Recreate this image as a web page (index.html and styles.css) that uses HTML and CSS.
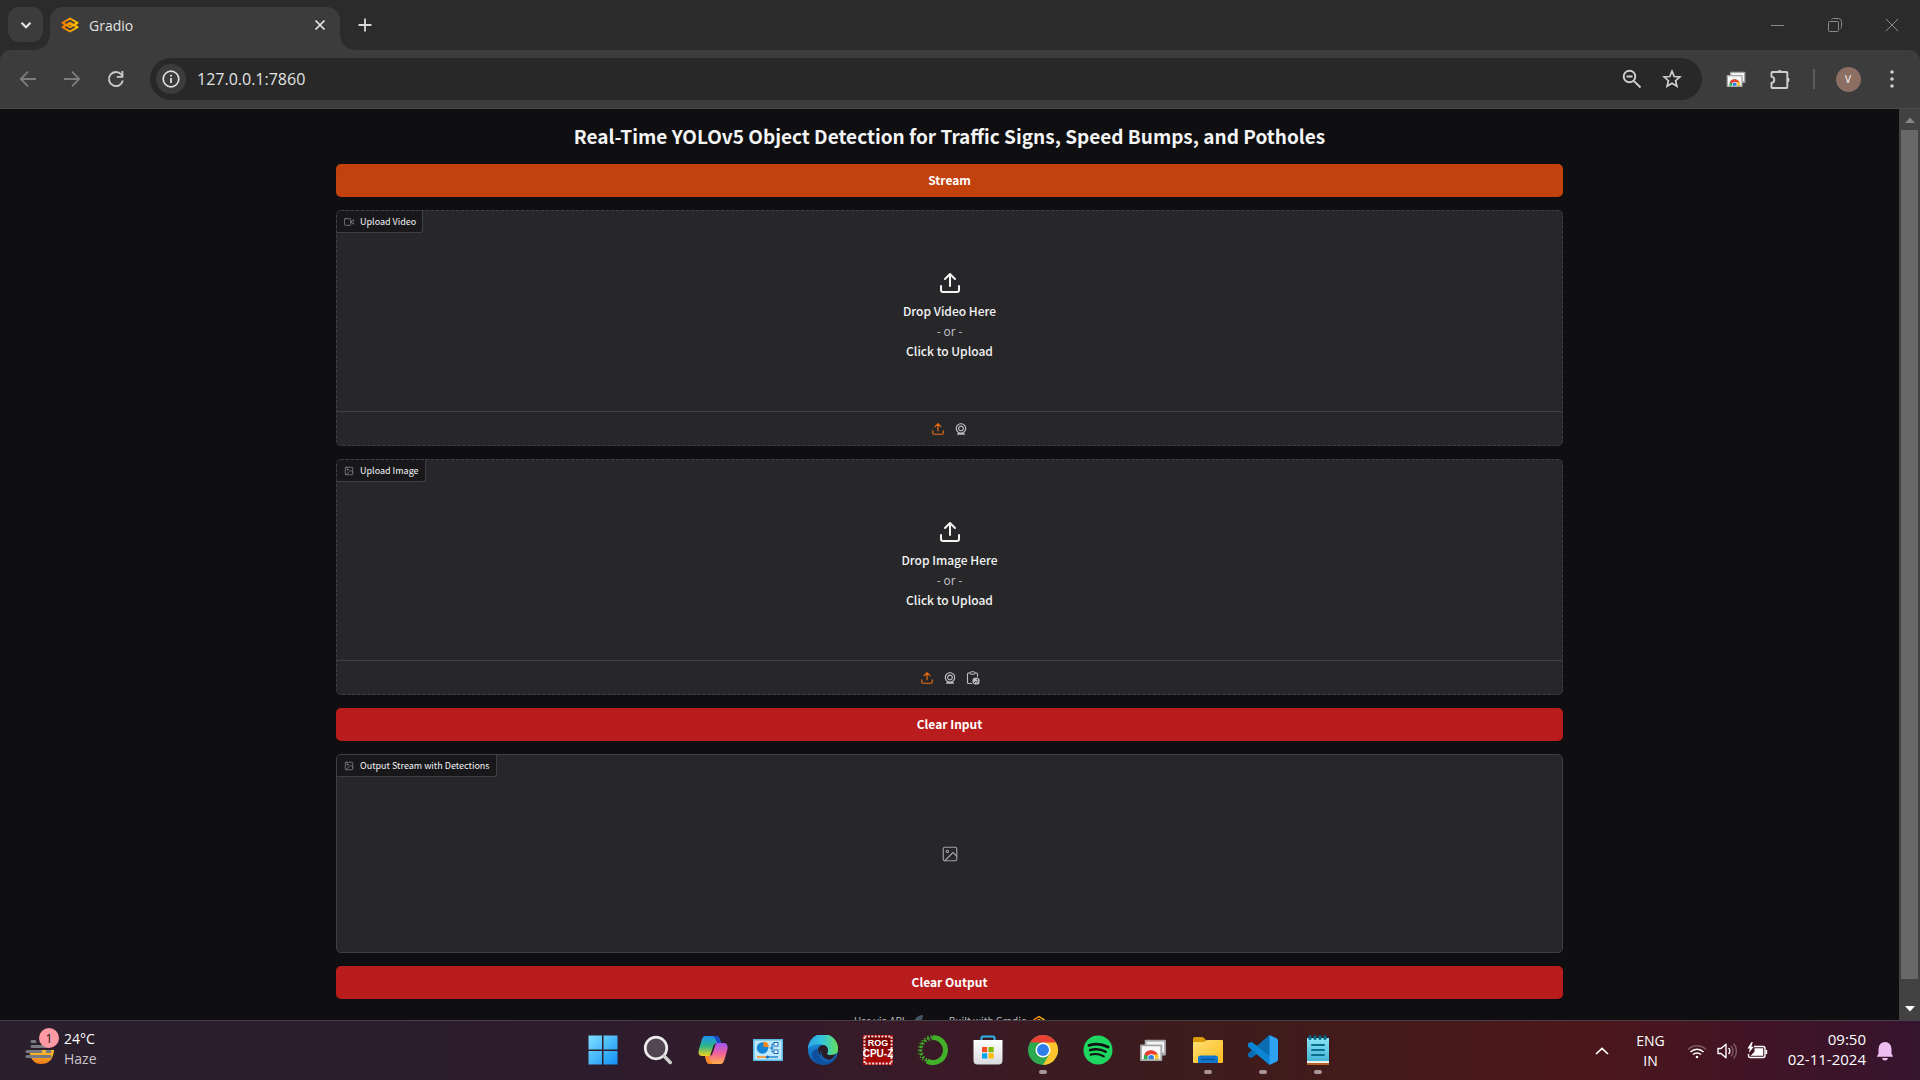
FILE: index.html
```html
<!DOCTYPE html>
<html lang="en">
<head>
<meta charset="utf-8">
<meta name="viewport" content="width=device-width, initial-scale=1">
<title>Gradio</title>
<link rel="stylesheet" href="styles.css">
</head>
<body>
<svg class="defs" width="0" height="0" aria-hidden="true">
  <defs>
    <linearGradient id="g-logo" x1="0" y1="0" x2="1" y2="0"><stop offset="0" stop-color="#f97700"/><stop offset="1" stop-color="#ffc400"/></linearGradient>
    <linearGradient id="g-win" x1="0" y1="0" x2="1" y2="1"><stop offset="0" stop-color="#7fe0ff"/><stop offset="1" stop-color="#1190f5"/></linearGradient>
    <linearGradient id="g-cop1" x1="0" y1="0" x2="0" y2="1"><stop offset="0" stop-color="#1f8ff0"/><stop offset=".5" stop-color="#2bb58b"/><stop offset="1" stop-color="#f2d21c"/></linearGradient>
    <linearGradient id="g-cop2" x1="0" y1="0" x2="0" y2="1"><stop offset="0" stop-color="#a057f2"/><stop offset=".5" stop-color="#f0609a"/><stop offset="1" stop-color="#ffb04a"/></linearGradient>
    <linearGradient id="g-edge1" x1="0" y1="0" x2="1" y2="0"><stop offset="0" stop-color="#2aa4e8"/><stop offset=".5" stop-color="#35c6d8"/><stop offset="1" stop-color="#66e05a"/></linearGradient>
    <linearGradient id="g-edge2" x1="0" y1="0" x2="0" y2="1"><stop offset="0" stop-color="#1f9be6"/><stop offset="1" stop-color="#0c58ac"/></linearGradient>
    <linearGradient id="g-store" x1="0" y1="0" x2="0" y2="1"><stop offset="0" stop-color="#fff"/><stop offset="1" stop-color="#d8dadd"/></linearGradient>
    <linearGradient id="g-folder" x1="0" y1="0" x2="1" y2="1"><stop offset="0" stop-color="#ffdf75"/><stop offset="1" stop-color="#fcbc1c"/></linearGradient>
    <linearGradient id="g-note" x1="0" y1="0" x2="0" y2="1"><stop offset="0" stop-color="#8be4f6"/><stop offset="1" stop-color="#43b4d6"/></linearGradient>
    <linearGradient id="g-sun" x1="0" y1="0" x2="0" y2="1"><stop offset="0" stop-color="#ffc52e"/><stop offset="1" stop-color="#f07a18"/></linearGradient>
    <linearGradient id="g-cpu" x1="0" y1="0" x2="0" y2="1"><stop offset="0" stop-color="#6e0000"/><stop offset="1" stop-color="#b00808"/></linearGradient>
    <clipPath id="c-remote"><rect x="3" y="13" width="18" height="10"/></clipPath>
    <symbol id="i-upload" viewBox="0 0 24 24"><g fill="none" stroke="currentColor" stroke-width="2" stroke-linecap="round" stroke-linejoin="round"><path d="M21 15v4a2 2 0 0 1-2 2H5a2 2 0 0 1-2-2v-4"/><path d="M17 8l-5-5-5 5M12 3v12"/></g></symbol>
    <symbol id="i-webcam" viewBox="0 0 24 24"><path fill="currentColor" d="M12 2c-4.963 0-9 4.038-9 9c0 3.328 1.82 6.232 4.513 7.79l-2.067 1.378A1 1 0 0 0 6 22h12a1 1 0 0 0 .555-1.832l-2.067-1.378C19.18 17.232 21 14.328 21 11c0-4.962-4.037-9-9-9zm0 16c-3.859 0-7-3.141-7-7c0-3.86 3.141-7 7-7s7 3.14 7 7c0 3.859-3.141 7-7 7z"/><path fill="currentColor" d="M12 6c-2.757 0-5 2.243-5 5s2.243 5 5 5s5-2.243 5-5s-2.243-5-5-5zm0 8c-1.654 0-3-1.346-3-3s1.346-3 3-3s3 1.346 3 3s-1.346 3-3 3z"/></symbol>
    <symbol id="i-image" viewBox="0 0 24 24"><g fill="none" stroke="currentColor" stroke-width="1.5" stroke-linecap="round" stroke-linejoin="round"><rect x="3" y="3" width="18" height="18" rx="2"/><circle cx="8.5" cy="8.5" r="1.5"/><path d="M21 15l-5-5L5 21"/></g></symbol>
    <symbol id="i-video" viewBox="0 0 24 24"><g fill="none" stroke="currentColor" stroke-width="1.5" stroke-linecap="round" stroke-linejoin="round"><path d="M23 7l-7 5 7 5z"/><rect x="1" y="4" width="15" height="16" rx="2"/></g></symbol>
    <symbol id="i-gradio" viewBox="0 0 18 16"><g fill="none" stroke="url(#g-logo)" stroke-width="2" stroke-linejoin="round"><path d="M1.500 5.800L9 1.500l7.500 4.300L9 10.200z"/><path d="M1.500 10.200L9 5.800l7.500 4.400L9 14.500z"/></g></symbol>
    <symbol id="i-chrome" viewBox="0 0 32 32"><circle cx="16" cy="16" r="15" fill="#2da94f"/><path d="M16 16L3 8.500A15 15 0 0 1 29 8.500z" fill="#ea3f33"/><path d="M3 8.500L9.900 20L16 16L16 8.500z" fill="#2da94f"/><path d="M16 8.500H29A15 15 0 0 1 16 31L22.500 19.800z" fill="#fdc52d"/><circle cx="16" cy="16" r="7.500" fill="#fff"/><circle cx="16" cy="16" r="6" fill="#2f7de9"/></symbol>
    <symbol id="i-remote" viewBox="0 0 30 26"><rect x="6" y="2" width="23" height="17" rx="1" fill="#a5a7a9"/><rect x="8" y="4" width="19" height="12" fill="#f4f4f4"/><rect x="1" y="7" width="24" height="18" rx="1" fill="#a5a7a9"/><rect x="3" y="9" width="20" height="14" fill="#f8f8f8"/><g clip-path="url(#c-remote)"><circle cx="13" cy="21.500" r="8" fill="#2da94f"/><path d="M5.500 18A8 8 0 0 1 20 17.800L13 21z" fill="#ea3f33"/><path d="M13 18h7.500a8 8 0 0 1 .5 6h-8z" fill="#fdc52d"/><circle cx="13" cy="21.500" r="4" fill="#fff"/><circle cx="13" cy="21.500" r="3.100" fill="#2f7de9"/></g></symbol>
  </defs>
</svg>

<header class="browser">
  <div class="tabstrip">
    <button class="tab-search" aria-label="Search tabs"><svg width="14" height="14" viewBox="0 0 14 14"><path d="M2.500 4.800L7 9.300l4.500-4.500" fill="none" stroke="#e3e3e3" stroke-width="2.200"/></svg></button>
    <div class="tab">
      <svg width="18" height="16"><use href="#i-gradio"/></svg>
      <span class="tab-title">Gradio</span>
      <button class="tab-close" aria-label="Close tab"><svg width="12" height="12" viewBox="0 0 12 12"><path d="M1.500 1.500l9 9M10.500 1.500l-9 9" stroke="#e8e8e8" stroke-width="1.700"/></svg></button>
    </div>
    <button class="new-tab" aria-label="New tab"><svg width="14" height="14" viewBox="0 0 14 14"><path d="M7 .5v13M.5 7h13" stroke="#d8d8d8" stroke-width="1.800"/></svg></button>
    <div class="window-controls">
      <button aria-label="Minimize"><svg width="14" height="14" viewBox="0 0 14 14"><path d="M0 7.500h13" stroke="#8a8a8a"/></svg></button>
      <button aria-label="Restore"><svg width="14" height="14" viewBox="0 0 14 14" fill="none" stroke="#8a8a8a"><rect x=".5" y="3.500" width="10" height="10" rx="1"/><path d="M3.500 1.500q.5-1 2-1h5q3 0 3 3v5q0 1.500-1 2"/></svg></button>
      <button aria-label="Close"><svg width="14" height="14" viewBox="0 0 14 14"><path d="M.8.800l12.400 12.400M13.200.800L.8 13.200" stroke="#8a8a8a"/></svg></button>
    </div>
  </div>
  <div class="toolbar">
    <div class="tool-group">
      <button class="tool-button" aria-label="Back"><svg width="18" height="18" viewBox="0 0 18 18" fill="none" stroke="#7d7d7d" stroke-width="1.800"><path d="M17 9H2M9 1.700L1.800 9 9 16.300"/></svg></button>
      <button class="tool-button" aria-label="Forward"><svg width="18" height="18" viewBox="0 0 18 18" fill="none" stroke="#7d7d7d" stroke-width="1.800"><path d="M1 9h15M9 1.700L16.200 9 9 16.300"/></svg></button>
      <button class="tool-button" aria-label="Reload"><svg width="18" height="18" viewBox="0 0 18 18"><path d="M15.800 10.500A7 7 0 1 1 14.300 4.500L16 6.200" fill="none" stroke="#c9c9c9" stroke-width="1.900"/><path d="M16.300 1v6.800h-6.500V6h4.600V1z" fill="#c9c9c9"/></svg></button>
    </div>
    <form class="omnibox">
      <button type="button" class="site-info" aria-label="View site information"><svg width="18" height="18" viewBox="0 0 18 18"><circle cx="9" cy="9" r="7.800" fill="none" stroke="#dedede" stroke-width="1.700"/><path d="M9 8v5M9 4.700v1.800" stroke="#dedede" stroke-width="1.800"/></svg></button>
      <input class="address" type="text" aria-label="Address" value="127.0.0.1:7860">
      <button type="button" class="omni-button" aria-label="Zoom"><svg width="20" height="20" viewBox="0 0 20 20" fill="none" stroke="#cfcfcf" stroke-width="1.900"><circle cx="7.500" cy="7.500" r="5.800"/><path d="M4.500 7.500h6M11.800 11.800l6.700 6.700"/></svg></button>
      <button type="button" class="omni-button" aria-label="Bookmark this tab"><svg width="20" height="20" viewBox="0 0 20 20"><path d="M10 2.200l2.200 5.300 5.700.500-4.300 3.700 1.300 5.600-4.900-3-4.900 3 1.300-5.600L2.100 8l5.700-.5z" fill="none" stroke="#cfcfcf" stroke-width="1.700"/></svg></button>
    </form>
    <div class="tool-group">
      <button class="tool-button" aria-label="Chrome Remote Desktop"><svg width="20" height="18"><use href="#i-remote"/></svg></button>
      <button class="tool-button" aria-label="Extensions"><svg width="22" height="22" viewBox="0 0 22 22"><path d="M4 4h13.500q.8 0 .8.800V19.200q0 .8-.8.800H3.300q-.8 0-.8-.800V15q2.800-.3 2.800-3.200T2.500 8.600V4.800Q2.500 4 3.300 4z" fill="none" stroke="#cfcfcf" stroke-width="1.900"/><path d="M8 4a2.700 2.700 0 0 1 5.200 0zM18.600 9.200a2.700 2.700 0 0 1 0 5.200z" fill="#cfcfcf"/></svg></button>
      <span class="divider"></span>
      <button class="tool-button" aria-label="Profile"><span class="avatar">V</span></button>
      <button class="tool-button" aria-label="Menu"><svg width="4" height="18" viewBox="0 0 4 18" fill="#cfcfcf"><circle cx="2" cy="2" r="1.800"/><circle cx="2" cy="9" r="1.800"/><circle cx="2" cy="16" r="1.800"/></svg></button>
    </div>
  </div>
</header>

<div class="viewport">
  <div class="page">
    <main class="app">
      <h1 class="title">Real-Time YOLOv5 Object Detection for Traffic Signs, Speed Bumps, and Potholes</h1>
      <button class="action primary">Stream</button>

      <section class="block dashed">
        <h2 class="block-label"><svg width="10" height="10"><use href="#i-video"/></svg>Upload Video</h2>
        <button class="drop">
          <svg width="24" height="24"><use href="#i-upload"/></svg>
          <span class="drop-text"><span>Drop Video Here</span><span class="or">- or -</span><span>Click to Upload</span></span>
        </button>
        <div class="sources">
          <button class="source active" aria-label="Upload file"><svg width="14" height="14"><use href="#i-upload"/></svg></button>
          <button class="source" aria-label="Record video"><svg width="14" height="14"><use href="#i-webcam"/></svg></button>
        </div>
      </section>

      <section class="block dashed">
        <h2 class="block-label"><svg width="10" height="10"><use href="#i-image"/></svg>Upload Image</h2>
        <button class="drop">
          <svg width="24" height="24"><use href="#i-upload"/></svg>
          <span class="drop-text"><span>Drop Image Here</span><span class="or">- or -</span><span>Click to Upload</span></span>
        </button>
        <div class="sources">
          <button class="source active" aria-label="Upload file"><svg width="14" height="14"><use href="#i-upload"/></svg></button>
          <button class="source" aria-label="Capture from camera"><svg width="14" height="14"><use href="#i-webcam"/></svg></button>
          <button class="source" aria-label="Paste from clipboard"><svg width="14" height="14" viewBox="0 0 14 14"><path d="M4 2H2.500q-1 0-1 1v8.500q0 1 1 1H6M9 2h1.500q1 0 1 1v3" fill="none" stroke="currentColor" stroke-width="1.100"/><rect x="4" y=".8" width="5" height="2.400" rx="1" fill="none" stroke="currentColor"/><rect x="6.500" y="6.800" width="7" height="6.600" rx="2.500" fill="currentColor"/><path d="M7.500 12.500l2-2 1.200 1 1.300-1.300" stroke="#27272a" fill="none"/><circle cx="11.300" cy="8.800" r=".7" fill="#27272a"/></svg></button>
        </div>
      </section>

      <button class="action stop">Clear Input</button>

      <section class="block output">
        <h2 class="block-label"><svg width="10" height="10"><use href="#i-image"/></svg>Output Stream with Detections</h2>
        <svg class="empty" width="18" height="18"><use href="#i-image"/></svg>
      </section>

      <button class="action stop">Clear Output</button>
    </main>
    <footer class="footer">
      <a href="#api">Use via API <svg width="12" height="12" viewBox="0 0 12 12"><path d="M12 0Q6 0 3 6l3 3q6-3 6-9z" fill="#43535f"/></svg></a>
      <span>·</span>
      <a href="#gradio">Built with Gradio <svg width="12" height="12"><use href="#i-gradio"/></svg></a>
    </footer>
  </div>
  <div class="scrollbar" aria-hidden="true">
    <svg width="10" height="6" viewBox="0 0 10 6"><path d="M0 6l5-5.500L10 6z" fill="#858585"/></svg>
    <span class="thumb"></span>
    <svg width="10" height="6" viewBox="0 0 10 6"><path d="M0 0l5 5.500L10 0z" fill="#fff"/></svg>
  </div>
</div>

<nav class="taskbar" aria-label="Taskbar">
  <button class="weather">
    <span class="weather-icon">
      <svg width="30" height="26" viewBox="0 0 30 26"><path d="M4 11h25q-1 14-13 14Q6 25 4 11z" fill="url(#g-sun)"/><g stroke="#777b80" stroke-width="3" stroke-linecap="round"><path d="M7 2.500h3M7 7.500h16M2 12.500h14M22 12.500h3M2 17.500h23"/></g></svg>
      <span class="badge">1</span>
    </span>
    <span class="weather-text"><span>24°C</span><span class="muted">Haze</span></span>
  </button>
  <div class="apps">
    <button class="app-icon" aria-label="Start"><svg width="30" height="30" viewBox="0 0 30 30" fill="url(#g-win)"><path d="M.5.500H14v14H.5zM15.500.500H29.500v14H15.500zM.5 16H14v13.500H.5zM15.500 16h14v13.500h-14z" /></svg></button>
    <button class="app-icon" aria-label="Search"><svg width="30" height="30" viewBox="0 0 30 30"><circle cx="13" cy="13" r="10.800" fill="#524650" stroke="#ececec" stroke-width="2.700"/><path d="M21 21l6.300 6.500" stroke="#cfcfcf" stroke-width="3.500" stroke-linecap="round"/></svg></button>
    <button class="app-icon" aria-label="Copilot"><svg width="32" height="30" viewBox="0 0 32 30"><path d="M8 1h11q3 0 4 4l1 3h-4q-3 0-4 4l-3 9H5Q0 21 2 14L5 4q1-3 3-3z" fill="url(#g-cop1)"/><path d="M15 1h4q3 0 4 4l1 3h-4q-2-7-5-7z" fill="#1b48c8"/><path d="M24 29H13q-3 0-4-4l-1-4h4q3 0 4-4l3-9h8q5 0 3 8l-3 10q-1 3-3 3z" fill="url(#g-cop2)"/><path d="M17 29h-4q-3 0-4-4l-1-4h4q2 8 5 8z" fill="#f58a2c"/></svg></button>
    <button class="app-icon" aria-label="Control Panel"><svg width="30" height="24" viewBox="0 0 30 24"><rect x="0" y="1" width="30" height="22" fill="#56bde9"/><rect x="1.500" y="2.500" width="27" height="19" fill="#bfe8fa"/><circle cx="9.500" cy="10" r="5.800" fill="#1484d6"/><path d="M10.500 3.500a6 6 0 0 1 5.500 5.500h-5.500z" fill="#f98b1b"/><path d="M16.500 10h4M20.500 6h-1.500v8h1.500" fill="none" stroke="#0c6ac0"/><g fill="#fff" stroke="#0c6ac0"><rect x="21" y="4.500" width="4" height="3.500"/><rect x="21" y="12" width="4" height="3.500"/></g><path d="M4 19h9" stroke="#f98b1b" stroke-width="1.500"/><path d="M13 19h12" stroke="#0c6ac0" stroke-width="1.200"/><circle cx="14.500" cy="19" r="1.500" fill="#0c6ac0"/></svg></button>
    <button class="app-icon" aria-label="Edge"><svg width="30" height="30" viewBox="0 0 30 30"><circle cx="15" cy="15" r="15" fill="url(#g-edge2)"/><path d="M0 13.500A15 15 0 0 1 30 14q0 6-7 6-4 0-4-1.500 1-1 1-3 0-5-6.500-6Q5 8.500 0 13.500z" fill="url(#g-edge1)"/><path d="M10 14q1-4 6-4 4 1 4 5.500 0 2-1 3 0 1.500 4 1.500 3 0 5.300-1.500-2.500 6-7.300 6.500Q10 24 10 14z" fill="#2b1b28"/><path d="M10 14q-1 11 10 12 4 0 8-4-4 8-13 8Q4 28 4 19q1-5 6-5z" fill="#104f9e"/><path d="M13 15q0 8 8 10 4 0 7-6.500 1.500 1-.5 4-4 5-10 4Q10 24 13 15z" fill="#1461b0"/></svg></button>
    <button class="app-icon" aria-label="ROG CPU-Z"><svg width="30" height="30" viewBox="0 0 30 30"><rect width="30" height="30" fill="#b30d0d"/><rect x="1.500" y="1.500" width="27" height="27" fill="url(#g-cpu)" stroke="#f2dada" stroke-width="2" stroke-dasharray="2 1.400"/><text class="rog" x="15" y="11" text-anchor="middle">ROG</text><text class="cpuz" x="15" y="22" text-anchor="middle">CPU-Z</text></svg></button>
    <button class="app-icon" aria-label="Anaconda"><svg width="30" height="30" viewBox="0 0 30 30" fill="none" stroke="#43b02a"><path d="M15 2.500a12.500 12.500 0 1 1-6 23.500" stroke-width="5"/><path d="M15 2.500A12.500 12.500 0 0 0 9 26" stroke-width="2" stroke-dasharray="2.500 1.300"/><path d="M15 4.500A10.500 10.500 0 0 0 10 24.500" stroke-width="1.500" stroke-dasharray="1.300 2"/><path d="M14 .8A14.300 14.300 0 0 0 7 27" stroke-width="1.200" stroke-dasharray="1.500 2"/></svg></button>
    <button class="app-icon" aria-label="Microsoft Store"><svg width="30" height="30" viewBox="0 0 30 30"><path d="M8.500 7V3q0-1.500 1.500-1.500h10q1.500 0 1.500 1.500v4" fill="none" stroke="#2fb4ee" stroke-width="2"/><path d="M.5 5h29v20q0 4.500-4 4.500h-21q-4 0-4-4.500z" fill="url(#g-store)"/><path d="M9 12h5.200v5.200H9z" fill="#f25022"/><path d="M15.500 12h5.200v5.200h-5.200z" fill="#7fba00"/><path d="M9 18.300h5.200v5.200H9z" fill="#00a4ef"/><path d="M15.500 18.300h5.200v5.200h-5.200z" fill="#ffb900"/></svg></button>
    <button class="app-icon running" aria-label="Chrome"><svg width="32" height="32"><use href="#i-chrome"/></svg></button>
    <button class="app-icon" aria-label="Spotify"><svg width="30" height="30" viewBox="0 0 30 30"><circle cx="15" cy="15" r="14.500" fill="#1ed760"/><g fill="none" stroke="#101010" stroke-linecap="round"><path d="M6 10.300q10-3 19 1.700" stroke-width="2.900"/><path d="M7 15.200q8.500-2.400 15.700 1.600" stroke-width="2.400"/><path d="M7.500 19.700q7-1.800 13.300 1.700" stroke-width="2"/></g></svg></button>
    <button class="app-icon" aria-label="Remote Desktop"><svg width="28" height="24"><use href="#i-remote"/></svg></button>
    <button class="app-icon running" aria-label="File Explorer"><svg width="30" height="28" viewBox="0 0 30 28"><path d="M0 3q0-2 2-2h7q1.500 0 3 2l1.500 2H28v6H0z" fill="#dd9a08"/><path d="M0 7q0-1 1-1h10l3-2h15q1 0 1 1v21q0 1-1 1H1q-1 0-1-1z" fill="url(#g-folder)"/><path d="M5 27v-5q0-2.500 2.500-2.500h15q2.500 0 2.500 2.500v5z" fill="#0f78cf"/><path d="M8.500 23.500h13" stroke="#0a4f94" stroke-width="1.500"/></svg></button>
    <button class="app-icon running" aria-label="Visual Studio Code"><svg width="30" height="30" viewBox="0 0 30 30"><path d="M21.500 0L10 11.500 3.500 7 0 8.500v3l21.500 18.500 1-8.500z" fill="#0a80cc"/><path d="M21.500 30L10 18.500 3.500 23 0 21.500v-3L21.500 0l1 8.500z" fill="#0a6db3"/><path d="M0 8.500L3.500 7 22 21.500V30L0 11.500z" fill="#0b85d4"/><path d="M21.500 0l7.500 3.500 1 1.500v20l-1 1.500-7.500 3.500z" fill="#2ea2f2"/></svg></button>
    <button class="app-icon running" aria-label="Notepad"><svg width="24" height="32" viewBox="0 0 24 32"><rect x="1" y="27" width="22" height="4" fill="#b06020"/><rect x="1" y="25" width="22" height="4" fill="#eee"/><rect x="1" y="4" width="22" height="23" fill="url(#g-note)"/><g stroke="#0a6d8d" stroke-width="2" stroke-linecap="round"><path d="M6 11h12M6 16h12M6 21h12"/></g><g fill="#0a6585"><rect x="2.500" y="1" width="3" height="5" rx="1.500"/><rect x="7.500" y="1" width="3" height="5" rx="1.500"/><rect x="12.500" y="1" width="3" height="5" rx="1.500"/><rect x="17.500" y="1" width="3" height="5" rx="1.500"/></g></svg></button>
  </div>
  <div class="tray">
    <button class="tray-button" aria-label="Show hidden icons"><svg width="14" height="8" viewBox="0 0 14 8"><path d="M1 7l6-5.700L13 7" fill="none" stroke="#fff" stroke-width="1.700"/></svg></button>
    <button class="tray-button language"><span>ENG</span><span>IN</span></button>
    <button class="tray-button quick" aria-label="Network, sound and battery">
      <svg width="20" height="16" viewBox="0 0 20 16" fill="none" stroke="#fff" stroke-width="1.500"><path d="M1 6.500a12.500 12.500 0 0 1 18 0" stroke="#7e5a62"/><path d="M3.500 9a9 9 0 0 1 13 0M6 11.600a5.600 5.600 0 0 1 8 0"/><circle cx="10" cy="14" r="1.300" fill="#fff" stroke="none"/></svg>
      <svg width="20" height="18" viewBox="0 0 20 18" fill="none" stroke="#fff" stroke-width="1.400" stroke-linejoin="round"><path d="M1 6.500h3l5-4.300v13.600l-5-4.300H1z"/><path d="M11.500 6a4 4 0 0 1 0 6"/><path d="M14 3.800a7.500 7.500 0 0 1 0 10.400M16.500 1.500a11 11 0 0 1 0 15" stroke="#7e5a62"/></svg>
      <svg width="21" height="18" viewBox="0 0 21 18"><path d="M7 4.500h9q2 0 2 2v7q0 2-2 2H3.500q-2 0-2-2V12" fill="none" stroke="#fff" stroke-width="1.400"/><path d="M7.500 6.300h8.700v7.400H3.500l4-4z" fill="#fff"/><path d="M18.500 8h1.700v4h-1.700z" fill="#fff"/><path d="M4.500 0L.5 6.500h2.300l-1 4.500 5-6.300H4.300l1.500-4.700z" fill="#fff"/></svg>
    </button>
    <button class="tray-button clock"><span>09:50</span><span>02-11-2024</span></button>
    <button class="tray-button" aria-label="Notifications"><svg width="18" height="20" viewBox="0 0 18 20" fill="#f0bdf2"><path d="M9 1q6.200.3 6.500 7v4.500l1.700 3.300H.8L2.500 12.500V8Q2.800 1.300 9 1zM6 17h6q-.5 2.500-3 2.500T6 17z"/></svg></button>
  </div>
</nav>
</body>
</html>
```
FILE: styles.css
```css
* { box-sizing: border-box; }

body {
  margin: 0;
  height: 100vh;
  display: flex;
  flex-direction: column;
  overflow: hidden;
  background: #0f0f11;
  font-family: "Open Sans", "Noto Sans", sans-serif;
}

button {
  margin: 0;
  padding: 0;
  border: 0;
  background: none;
  color: inherit;
  font: inherit;
}

svg { display: block; flex: none; }

.defs { position: absolute; }

/* Browser frame */
.browser { flex: none; background: #2b2b2b; color: #e3e3e3; }

.tabstrip { display: flex; height: 50px; padding: 7px 0 0 8px; }

.tab-search {
  display: grid;
  place-items: center;
  width: 35px;
  height: 35px;
  border-radius: 11px;
  background: #3c3c3c;
}

.tab {
  position: relative;
  display: flex;
  align-items: center;
  gap: 10px;
  width: 290px;
  height: 43px;
  margin-left: 7px;
  padding: 0 14px 7px 11px;
  border-radius: 13px 13px 0 0;
  background: #3c3c3c;
  font-size: 14px;
}

.tab::before,
.tab::after {
  content: "";
  position: absolute;
  bottom: 0;
  width: 14px;
  height: 14px;
}

.tab::before {
  right: 100%;
  background: radial-gradient(circle at 0 0, transparent 13px, #3c3c3c 14px);
}

.tab::after {
  left: 100%;
  background: radial-gradient(circle at 100% 0, transparent 13px, #3c3c3c 14px);
}

.tab-title { flex: 1; }

.tab-close,
.new-tab { display: grid; place-items: center; }

.new-tab { width: 34px; height: 35px; margin-left: 8px; }

.window-controls { display: flex; margin-left: auto; height: 35px; }

.window-controls button { display: grid; place-items: center; width: 57px; }

.toolbar {
  display: flex;
  align-items: center;
  gap: 12px;
  height: 59px;
  padding: 0 6px;
  border-bottom: 1px solid #4a4a4a;
  border-radius: 10px 10px 0 0;
  background: #3c3c3c;
}

.tool-group { display: flex; align-items: center; }

.tool-button {
  display: grid;
  place-items: center;
  width: 44px;
  height: 42px;
}

.divider { width: 2px; height: 20px; margin: 0 11px; background: #5c5c5c; }

.avatar {
  display: grid;
  place-items: center;
  width: 25px;
  height: 25px;
  border-radius: 50%;
  background: #8d6e63;
  color: #fff;
  font-size: 10px;
}

.omnibox {
  flex: 1;
  display: flex;
  align-items: center;
  min-width: 0;
  height: 42px;
  padding: 0 10px 0 6px;
  border-radius: 21px;
  background: #282828;
}

.site-info {
  display: grid;
  place-items: center;
  width: 30px;
  height: 30px;
  border-radius: 50%;
  background: #3c3c3c;
}

.address {
  flex: 1;
  min-width: 0;
  margin: 0 0 0 11px;
  padding: 0;
  border: 0;
  outline: 0;
  background: none;
  color: #e3e3e3;
  font: 16px "Open Sans", "Noto Sans", sans-serif;
}

.omni-button { display: grid; place-items: center; width: 40px; height: 40px; }

/* Page */
.viewport { flex: 1; display: flex; min-height: 0; }

.page {
  flex: 1;
  min-width: 0;
  overflow: hidden;
  color: #f4f4f5;
  font-family: "Noto Sans CJK SC", "Noto Sans", sans-serif;
}

.app {
  display: flex;
  flex-direction: column;
  gap: 13px;
  width: 90%;
  max-width: 1227px;
  margin: 0 auto;
  padding-top: 12px;
}

.title {
  margin: 0;
  font-size: 19px;
  font-weight: 700;
  line-height: 30px;
  text-align: center;
}

.action {
  height: 33px;
  padding-bottom: 2px;
  border-radius: 5px;
  color: #fff;
  font-size: 12px;
  font-weight: 700;
  line-height: 20px;
}

.primary { background: #c2410c; }

.stop { background: #b91c1c; }

.block {
  position: relative;
  border: 1px solid #3f3f46;
  border-radius: 5px;
  overflow: hidden;
  background: #27272a;
}

.dashed { border-style: dashed; }

.block-label {
  position: absolute;
  top: 0;
  left: 0;
  display: flex;
  align-items: center;
  gap: 6px;
  margin: 0;
  padding: 1px 6px 0 7px;
  border: 1px solid #3f3f46;
  border-width: 0 1px 1px 0;
  border-radius: 0 0 3px 0;
  background: #18181b;
  font-size: 9px;
  font-weight: 400;
  line-height: 20px;
}

.block-label svg { color: #a1a1aa; }

.drop {
  display: flex;
  flex-direction: column;
  align-items: center;
  justify-content: center;
  gap: 6px;
  width: 100%;
  height: 200px;
  padding-top: 10px;
}

.drop-text {
  display: flex;
  flex-direction: column;
  font-size: 12px;
  font-weight: 500;
  line-height: 20px;
}

.or { color: #bbbbc2; font-weight: 400; }

.sources {
  display: flex;
  align-items: center;
  justify-content: center;
  gap: 9px;
  height: 34px;
  border-top: 1px solid #3f3f46;
}

.source { color: #bbbbc2; }

.source.active { color: #ea6c10; }

.output { display: grid; place-items: center; height: 199px; }

.empty { color: #a1a1aa; }

.footer {
  display: flex;
  justify-content: center;
  gap: 8px;
  margin-top: 12px;
  color: #bbbbc2;
  font-size: 10px;
  line-height: 20px;
}

.footer a {
  display: flex;
  align-items: center;
  gap: 6px;
  color: inherit;
  text-decoration: none;
}

.scrollbar {
  display: flex;
  flex-direction: column;
  align-items: center;
  width: 21px;
  padding: 8px 0;
  background: #424242;
}

.thumb { flex: 1; width: 17px; margin: 7px 0 27px; background: #686868; }

/* Taskbar */
.taskbar {
  flex: none;
  display: grid;
  grid-template-columns: 1fr auto 1fr;
  height: 60px;
  border-top: 1px solid #4a3f46;
  background: linear-gradient(90deg, #2b1f2d 0%, #2c1c2d 30%, #3a1a26 50%, #3d1c1b 63%, #4c171a 82%, #431424 90%, #35142e 100%);
  color: #fff;
  font-size: 15px;
  line-height: 20px;
}

.weather {
  display: flex;
  align-items: center;
  gap: 8px;
  padding: 0 0 3px 25px;
  font-size: 14px;
  text-align: left;
}

.weather-icon { position: relative; width: 31px; padding-top: 5px; }

.badge {
  position: absolute;
  top: -6px;
  right: -3px;
  width: 20px;
  height: 20px;
  border-radius: 50%;
  background: #ff99a4;
  color: #2b1b20;
  font-size: 13px;
  line-height: 20px;
  text-align: center;
}

.weather-text { display: flex; flex-direction: column; }

.muted { color: #c9c3c9; }

.apps { display: flex; padding-bottom: 1px; }

.app-icon { position: relative; display: grid; place-items: center; width: 55px; }

.running::after {
  content: "";
  position: absolute;
  bottom: 5px;
  left: 50%;
  width: 8px;
  height: 4px;
  margin-left: -4px;
  border-radius: 2px;
  background: #a8959a;
}

.rog { fill: #fff; font: bold 9px "Liberation Sans", sans-serif; }

.cpuz { fill: #fff; font: bold 10px "Liberation Sans Narrow", "Liberation Sans", sans-serif; }

.tray { display: flex; align-items: center; justify-content: flex-end; padding-right: 26px; }

.tray-button { text-align: center; }

.language { display: flex; flex-direction: column; margin: 0 22px 0 27px; font-size: 14px; }

.quick { display: flex; align-items: center; gap: 10px; }

.clock {
  display: flex;
  flex-direction: column;
  margin: 0 10px 0 20px;
  padding-bottom: 3px;
  text-align: right;
}
```
